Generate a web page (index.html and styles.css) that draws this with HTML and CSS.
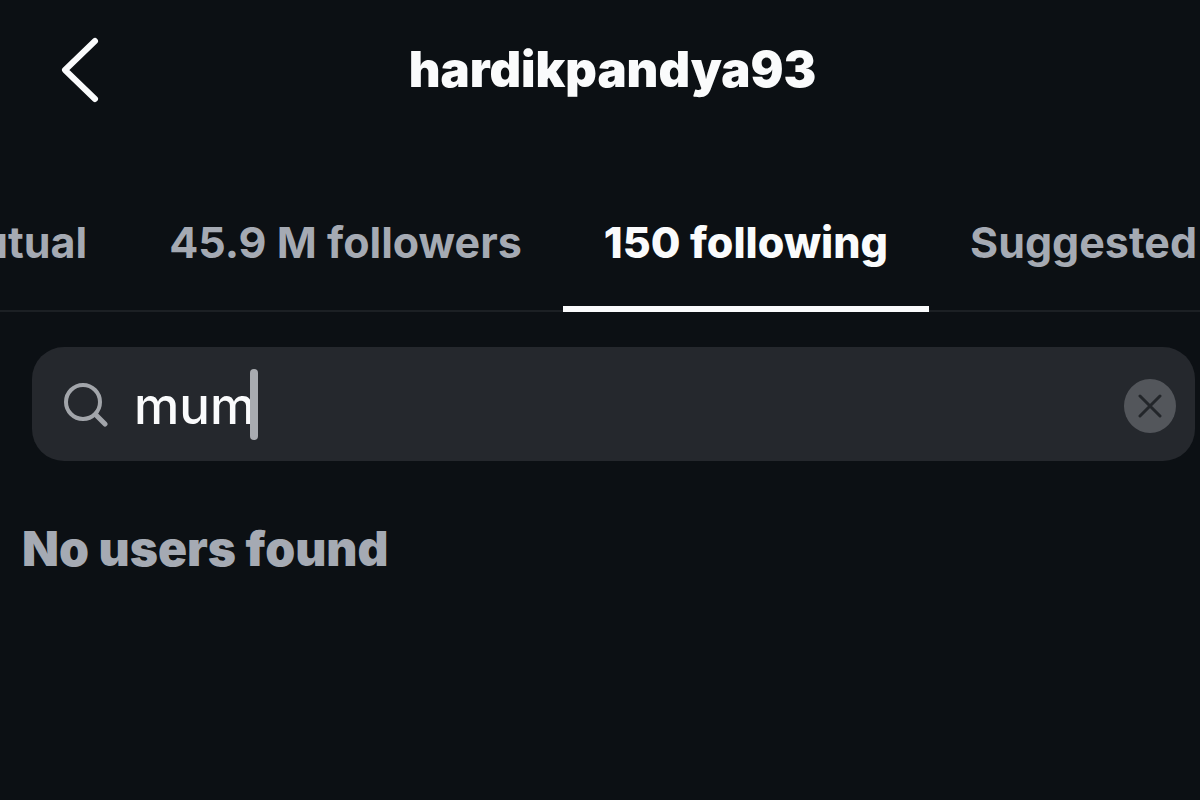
FILE: index.html
```html
<!DOCTYPE html>
<html lang="en">
<head>
<meta charset="utf-8">
<meta name="viewport" content="width=device-width, initial-scale=1">
<title>hardikpandya93</title>
<link rel="stylesheet" href="styles.css">
</head>
<body>
<header class="header">
  <button class="back" type="button" aria-label="Back">
    <svg width="44" height="72" viewBox="0 0 44 72" fill="none" stroke="currentColor" stroke-width="6" stroke-linecap="round" stroke-linejoin="round"><path d="M38 7 8 36 38 65"/></svg>
  </button>
  <h1 class="title">hardikpandya93</h1>
</header>
<nav class="tabs" aria-label="Connections">
  <a class="tab" href="#mutual">Mutual</a>
  <a class="tab" href="#followers">45.9 M followers</a>
  <a class="tab tab-active" href="#following" aria-current="page">150 following</a>
  <a class="tab" href="#suggested">Suggested</a>
</nav>
<main class="content">
  <form class="search" role="search">
    <label class="search-icon" for="query" aria-label="Search">
      <svg width="46" height="46" viewBox="0 0 46 46" fill="none" stroke="currentColor" stroke-width="4" stroke-linecap="round"><circle cx="19" cy="21" r="17"/><path d="M32 34l9 9" stroke-width="5"/></svg>
    </label>
    <div class="field">
      <input class="query" id="query" type="text" value="mum" autocomplete="off">
      <span class="caret"></span>
    </div>
    <button class="clear" type="reset" aria-label="Clear search">
      <svg width="24" height="24" viewBox="0 0 24 24" fill="none" stroke="currentColor" stroke-width="3" stroke-linecap="round"><path d="M2 2l20 20M22 2 2 22"/></svg>
    </button>
  </form>
  <p class="empty">No users found</p>
</main>
</body>
</html>
```
FILE: styles.css
```css
* {
  box-sizing: border-box;
}

body {
  margin: 0;
  min-height: 100vh;
  overflow-x: hidden;
  background: #0c1014;
  color: #fafbfc;
  font-family: Inter, "Liberation Sans", sans-serif;
}

button {
  padding: 0;
  border: 0;
  background: none;
  color: inherit;
  cursor: pointer;
}

svg {
  display: block;
}

.header {
  display: grid;
  grid-template-columns: 1fr auto 1fr;
  align-items: center;
  padding: 34px 32px 34px 57px;
}

.back {
  justify-self: start;
}

.title {
  margin: 0;
  font-size: 49px;
  line-height: 72px;
  font-weight: 900;
}

.tabs {
  display: flex;
  justify-content: flex-end;
  margin-top: 32px;
  padding-right: 3px;
  overflow: hidden;
  box-shadow: inset 0 -2px #1c2024;
}

.tab {
  flex: none;
  padding: 45px 41px 39px;
  border-bottom: 6px solid transparent;
  color: #a5aab3;
  font-size: 43px;
  line-height: 50px;
  font-weight: 700;
  text-decoration: none;
  white-space: nowrap;
}

.tab:last-child {
  padding-right: 0;
}

.tab-active {
  border-color: #fafbfc;
  color: #fafbfc;
  font-weight: 800;
}

.search {
  display: flex;
  align-items: center;
  margin: 35px 5px 0 32px;
  padding: 0 19px 0 32px;
  border-radius: 32px;
  background: #25282d;
}

.search-icon {
  margin-right: 24px;
  color: #a2a5aa;
}

.field {
  position: relative;
  flex: 1;
}

.query {
  display: block;
  width: 100%;
  height: 114px;
  padding: 2px 0 0;
  border: 0;
  outline: 0;
  background: none;
  color: #fafbfc;
  font-family: inherit;
  font-size: 51px;
  font-weight: 500;
}

.caret {
  position: absolute;
  top: 22px;
  left: 116px;
  width: 8px;
  height: 71px;
  border-radius: 4px;
  background: #a8abb0;
}

.clear {
  display: grid;
  place-items: center;
  width: 52px;
  height: 54px;
  margin-top: 4px;
  border-radius: 50%;
  background: #53565b;
  color: #23262a;
}

.empty {
  margin: 56px 22px 0;
  color: #a5aab3;
  font-size: 48px;
  line-height: 64px;
  font-weight: 900;
}
```
